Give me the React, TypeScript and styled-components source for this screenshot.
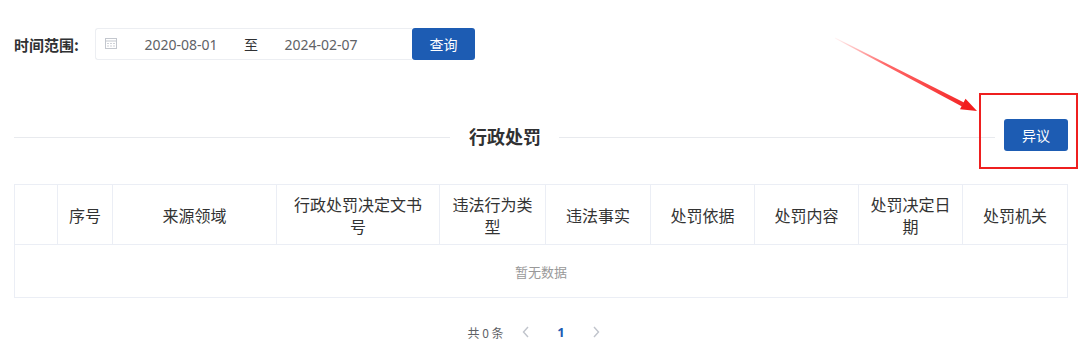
import React from "react";
import styled, { createGlobalStyle } from "styled-components";

const GlobalStyle = createGlobalStyle`
  html, body { margin: 0; padding: 0; background: #ffffff; }
  body {
    font-family: "Noto Sans", "Noto Sans CJK SC", sans-serif;
    color: #333333;
  }
  * { box-sizing: border-box; }
`;

const Page = styled.div`
  position: relative;
  width: 1080px;
  height: 350px;
  padding: 28px 13px 0 14px;
  overflow: hidden;
`;

const FilterRow = styled.div`
  display: flex;
  align-items: center;
  height: 32px;
`;

const FilterLabel = styled.span`
  font-size: 15px;
  font-weight: 700;
  color: #303133;
  width: 81px;
  font-family: "Noto Sans CJK SC", sans-serif;
`;

const RangeBox = styled.div`
  display: flex;
  align-items: center;
  width: 317px;
  height: 32px;
  border: 1px solid #eceef2;
  border-right: none;
  border-radius: 3px 0 0 3px;
  padding-left: 9px;
`;

const IconSlot = styled.span`
  display: flex;
  width: 16px;
  height: 12px;
`;

const DateText = styled.span`
  width: 120px;
  text-align: center;
  font-size: 14px;
  color: #606266;
`;

const Separator = styled.span`
  width: 20px;
  text-align: center;
  font-size: 14px;
  color: #303133;
  font-family: "Noto Sans CJK SC", sans-serif;
`;

const PrimaryButton = styled.button<{ $w?: number }>`
  height: 32px;
  width: ${(p) => p.$w ?? 63}px;
  background: #1d5cb3;
  color: #ffffff;
  border: none;
  border-radius: 3px;
  font-size: 14px;
  font-family: "Noto Sans CJK SC", sans-serif;
  padding: 0;
  cursor: pointer;
`;

const TitleRow = styled.div`
  display: flex;
  align-items: center;
  margin-top: 59px;
  height: 32px;
`;

const Rule = styled.div`
  flex: 1;
  height: 1px;
  margin-top: 4px;
  background: #e8eaee;
`;

const SectionTitle = styled.h2`
  margin: 2px 18px 0 19px;
  font-size: 18px;
  font-weight: 700;
  color: #303133;
  font-family: "Noto Sans CJK SC", sans-serif;
  line-height: 24px;
`;

const ButtonSlot = styled.div`
  margin-left: 9px;
  margin-right: -1px;
  display: flex;
`;

const Table = styled.table`
  margin-top: 33px;
  width: 1053px;
  table-layout: fixed;
  border-collapse: collapse;
  border: 1px solid #ebeef5;
  font-family: "Noto Sans CJK SC", sans-serif;
`;

const Th = styled.th`
  height: 60px;
  padding: 0 11px;
  font-size: 16px;
  font-weight: 400;
  line-height: 22px;
  color: #333333;
  text-align: center;
  border-right: 1px solid #ebeef5;
  border-bottom: 1px solid #ebeef5;
  &:last-child { border-right: none; }
`;

const EmptyCell = styled.td`
  height: 53px;
  text-align: center;
  font-size: 13px;
  color: #999999;
`;

const Pager = styled.div`
  display: flex;
  justify-content: center;
  align-items: center;
  height: 32px;
  margin-top: 18px;
  padding-left: 0;
  font-family: "Noto Sans CJK SC", sans-serif;
`;

const Total = styled.span`
  font-size: 12px;
  color: #606266;
  margin-right: 5px;
`;

const PagerItem = styled.span<{ $active?: boolean }>`
  width: 35px;
  display: flex;
  justify-content: center;
  align-items: center;
  font-size: 13px;
  font-weight: 700;
  font-family: "Noto Sans", sans-serif;
  color: ${(p) => (p.$active ? "#1d5cb3" : "#c0c4cc")};
`;

const HighlightBox = styled.div`
  position: absolute;
  left: 979px;
  top: 93px;
  width: 99px;
  height: 76px;
  border: 2px solid #ee1f1f;
  pointer-events: none;
`;

const ArrowLayer = styled.svg`
  position: absolute;
  left: 820px;
  top: 28px;
  pointer-events: none;
`;

const CalendarIcon = () => (
  <svg width="12" height="11" viewBox="0 0 12 11">
    <rect x="0.5" y="0.5" width="11" height="10" fill="none" stroke="#c3c7ce" />
    <line x1="0.5" y1="3" x2="11.5" y2="3" stroke="#c3c7ce" />
    <g fill="#cfd2d8">
      <rect x="2" y="5" width="2" height="1" />
      <rect x="5" y="5" width="2" height="1" />
      <rect x="8" y="5" width="2" height="1" />
      <rect x="2" y="7.5" width="2" height="1" />
      <rect x="5" y="7.5" width="2" height="1" />
      <rect x="8" y="7.5" width="2" height="1" />
    </g>
  </svg>
);

const Chevron = ({ dir }: { dir: "left" | "right" }) => (
  <svg width="8" height="12" viewBox="0 0 8 12">
    <path
      d={dir === "left" ? "M6 1 L1.5 6 L6 11" : "M2 1 L6.5 6 L2 11"}
      fill="none"
      stroke="#c0c4cc"
      strokeWidth="1.4"
    />
  </svg>
);

const columns: { title: React.ReactNode; width: number }[] = [
  { title: "", width: 43 },
  { title: "序号", width: 55 },
  { title: "来源领域", width: 164 },
  { title: "行政处罚决定文书号", width: 163 },
  { title: "违法行为类型", width: 106 },
  { title: "违法事实", width: 105 },
  { title: "处罚依据", width: 104 },
  { title: "处罚内容", width: 104 },
  { title: "处罚决定日期", width: 104 },
  { title: "处罚机关", width: 105 },
];

export default function App() {
  return (
    <>
      <GlobalStyle />
      <Page>
        <FilterRow>
          <FilterLabel>时间范围:</FilterLabel>
          <RangeBox>
            <IconSlot>
              <CalendarIcon />
            </IconSlot>
            <DateText>2020-08-01</DateText>
            <Separator>至</Separator>
            <DateText>2024-02-07</DateText>
          </RangeBox>
          <PrimaryButton>查询</PrimaryButton>
        </FilterRow>

        <TitleRow>
          <Rule />
          <SectionTitle>行政处罚</SectionTitle>
          <Rule />
          <ButtonSlot>
            <PrimaryButton $w={64}>异议</PrimaryButton>
          </ButtonSlot>
        </TitleRow>

        <Table>
          <colgroup>
            {columns.map((c, i) => (
              <col key={i} style={{ width: c.width }} />
            ))}
          </colgroup>
          <thead>
            <tr>
              {columns.map((c, i) => (
                <Th key={i}>{c.title}</Th>
              ))}
            </tr>
          </thead>
          <tbody>
            <tr>
              <EmptyCell colSpan={columns.length}>暂无数据</EmptyCell>
            </tr>
          </tbody>
        </Table>

        <Pager>
          <Total>共 0 条</Total>
          <PagerItem>
            <Chevron dir="left" />
          </PagerItem>
          <PagerItem $active>1</PagerItem>
          <PagerItem>
            <Chevron dir="right" />
          </PagerItem>
        </Pager>

        <HighlightBox />
        <ArrowLayer width="170" height="95" viewBox="820 28 170 95">
          <defs>
            <linearGradient id="arrowFade" x1="835" y1="38" x2="977" y2="111" gradientUnits="userSpaceOnUse">
              <stop offset="0" stopColor="#ff2a2a" stopOpacity="0.05" />
              <stop offset="0.35" stopColor="#ff2a2a" stopOpacity="0.7" />
              <stop offset="1" stopColor="#f21d1d" stopOpacity="1" />
            </linearGradient>
          </defs>
          <polygon
            points="835,37.6 964,102.4 962,106.6 835,38.4"
            fill="url(#arrowFade)"
          />
          <polygon points="977,111 965.5,98.8 960,109.2" fill="#f21d1d" />
        </ArrowLayer>
      </Page>
    </>
  );
}
